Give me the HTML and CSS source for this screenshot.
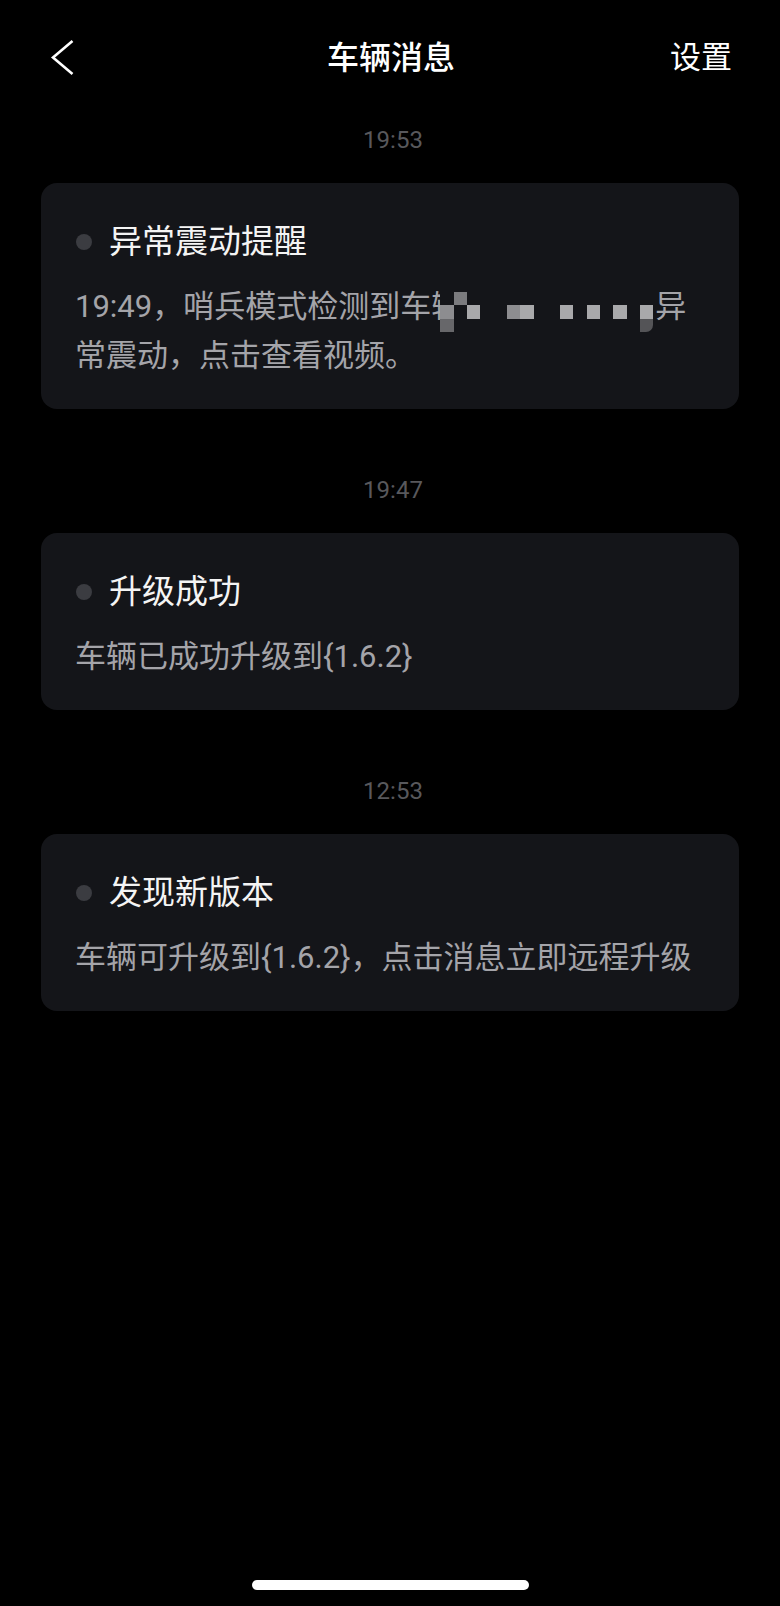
FILE: index.html
```html
<!DOCTYPE html>
<html lang="zh-CN">
<head>
<meta charset="utf-8">
<title>车辆消息</title>
<link rel="stylesheet" href="styles.css">
</head>
<body>
<div class="screen">
  <header class="nav">
    <div class="nav-left">
      <svg class="back" width="26" height="40" viewBox="0 0 26 40" aria-hidden="true">
        <polyline points="22.5,3 3,19.5 22.5,36" fill="none" stroke="#ffffff" stroke-width="2.6" stroke-linecap="butt" stroke-linejoin="miter"/>
      </svg>
    </div>
    <h1 class="nav-title">车辆消息</h1>
    <div class="nav-right">设置</div>
  </header>

  <main class="feed">
    <section class="group">
      <div class="time">19:53</div>
      <article class="card">
        <div class="card-head"><span class="dot"></span><h2 class="card-title">异常震动提醒</h2></div>
        <p class="card-body">19:49，哨兵模式检测到车辆<span class="mosaic"><span class="mosaic-grid"><span class="blk c1 r2 g2"></span><span class="blk c1 r3 g4"></span><span class="blk c2 r1 g3"></span><span class="blk c3 r2 g1"></span><span class="blk c6 r2 g2"></span><span class="blk c7 r2 g1"></span><span class="blk c10 r2 g1"></span><span class="blk c12 r2 g1"></span><span class="blk c14 r2 g1"></span><span class="blk c16 r2 g1"></span><span class="blk c16 r3 g5 tail"></span></span></span>异常震动，点击查看视频。</p>
      </article>
    </section>

    <section class="group">
      <div class="time">19:47</div>
      <article class="card">
        <div class="card-head"><span class="dot"></span><h2 class="card-title">升级成功</h2></div>
        <p class="card-body">车辆已成功升级到{1.6.2}</p>
      </article>
    </section>

    <section class="group">
      <div class="time">12:53</div>
      <article class="card">
        <div class="card-head"><span class="dot"></span><h2 class="card-title">发现新版本</h2></div>
        <p class="card-body">车辆可升级到{1.6.2}，点击消息立即远程升级</p>
      </article>
    </section>
  </main>

  <div class="home-indicator"></div>
</div>
</body>
</html>
```

FILE: styles.css
```css
* {
  box-sizing: border-box;
}

html, body {
  margin: 0;
  padding: 0;
  background: #000000;
}

.screen {
  min-height: 1606px;
  display: flex;
  flex-direction: column;
  font-family: Roboto, "Noto Sans CJK SC", sans-serif;
  color: #ffffff;
}

/* Navigation bar */
.nav {
  height: 116px;
  display: grid;
  grid-template-columns: 1fr auto 1fr;
  align-items: center;
  padding: 0 48px 0 50px;
}

.nav-left {
  display: flex;
  align-items: center;
}

.back {
  display: block;
}

.nav-title {
  margin: 0;
  font-size: 32px;
  font-weight: 500;
  line-height: 40px;
  color: #ffffff;
  text-align: center;
}

.nav-right {
  justify-self: end;
  font-size: 31px;
  line-height: 40px;
  color: #ffffff;
}

/* Message feed */
.feed {
  padding: 7px 41px 0 41px;
  display: flex;
  flex-direction: column;
  gap: 64px;
}

.group {
  display: flex;
  flex-direction: column;
  gap: 26px;
}

.time {
  text-align: center;
  font-size: 24px;
  line-height: 34px;
  color: #58585c;
  padding-left: 6px;
}

.card {
  background: #141519;
  border-radius: 16px;
  padding: 39px 30px 29px 35px;
}

.card-head {
  display: flex;
  align-items: center;
  gap: 17px;
  height: 40px;
}

.dot {
  flex: none;
  width: 16px;
  height: 16px;
  border-radius: 50%;
  background: #3b3c41;
}

.card-title {
  margin: 0;
  font-size: 33px;
  font-weight: 400;
  line-height: 40px;
  color: #f4f4f4;
}

.card-body {
  margin: 20px 0 0 -1px;
  font-size: 31px;
  line-height: 49px;
  color: #a4a4a9;
}

/* Pixelated privacy mosaic laid over the plate number */
.mosaic {
  display: inline-block;
  position: relative;
  width: 193px;
  height: 49px;
  vertical-align: top;
}

.mosaic-grid {
  position: absolute;
  left: -22px;
  top: 10px;
  display: grid;
  grid-template-columns: repeat(16, 13.33px);
  grid-template-rows: repeat(3, 13.33px);
  background: #141519;
}

.blk { display: block; }
.c1 { grid-column: 1; }
.c2 { grid-column: 2; }
.c3 { grid-column: 3; }
.c6 { grid-column: 6; }
.c7 { grid-column: 7; }
.c10 { grid-column: 10; }
.c12 { grid-column: 12; }
.c14 { grid-column: 14; }
.c16 { grid-column: 16; }
.r1 { grid-row: 1; }
.r2 { grid-row: 2; }
.r3 { grid-row: 3; }
.g1 { background: #a9a9ab; }
.g2 { background: #8d8d90; }
.g3 { background: #7b7b7e; }
.g4 { background: #67676a; }
.g5 { background: #545457; }
.tail { border-bottom-right-radius: 7px; }

/* Home indicator */
.home-indicator {
  align-self: center;
  width: 277px;
  height: 10px;
  border-radius: 5px;
  background: #ffffff;
  margin-top: auto;
  margin-bottom: 16px;
}
```
